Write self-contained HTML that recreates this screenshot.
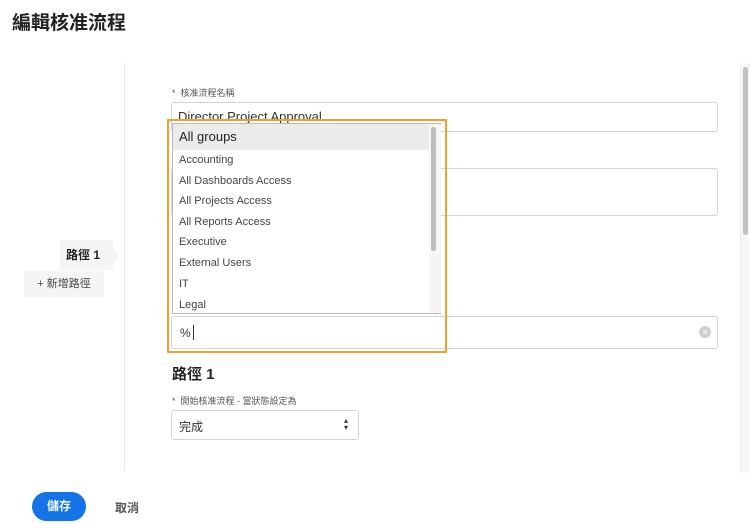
<!DOCTYPE html>
<html><head><meta charset="utf-8"><style>
*{box-sizing:border-box;margin:0;padding:0}
body{width:750px;height:532px;background:#fff;position:relative;overflow:hidden;font-family:"Liberation Sans","Noto Sans CJK TC",sans-serif;color:#222}
.a{position:absolute}
.inp{position:absolute;border:1px solid #d3d3d3;border-radius:3px;background:#fff}
.lbl{position:absolute;font-size:9px;color:#555}
.it{position:absolute;left:6px;font-size:11px;color:#444}
</style></head><body>
<div class="a" style="left:12px;top:8px;font-size:19px;font-weight:bold;color:#222">編輯核准流程</div>
<div class="a" style="left:124px;top:63px;width:1px;height:408px;background:#e6e6e6"></div>
<div class="a" style="left:60px;top:240px;width:53px;height:30px;background:#f5f5f5;font-size:12px;font-weight:bold;line-height:30px;padding-left:6px">路徑 1</div>
<div class="a" style="left:113px;top:248px;width:0;height:0;border-top:7px solid transparent;border-bottom:7px solid transparent;border-left:7px solid #f5f5f5"></div>
<div class="a" style="left:24px;top:271px;width:80px;height:26px;background:#f5f5f5;font-size:11px;line-height:26px;text-align:center;color:#444">+ 新增路徑</div>

<div class="lbl" style="left:172px;top:86px">* &nbsp;核准流程名稱</div>
<div class="inp" style="left:171px;top:102px;width:547px;height:30px"><div class="a" style="left:6px;top:6px;font-size:13px;color:#333">Director Project Approval</div></div>
<div class="inp" style="left:171px;top:168px;width:547px;height:48px"></div>
<div class="inp" style="left:171px;top:316px;width:547px;height:33px"><div class="a" style="left:8px;top:9px;font-size:12px;color:#333">%</div><div class="a" style="left:21px;top:8px;width:1px;height:15px;background:#333"></div><div class="a" style="left:527px;top:9px;width:12px;height:12px;border-radius:50%;background:#d0d0d0;color:#fff;font-size:9px;line-height:12px;text-align:center">×</div></div>

<div class="a" style="left:167px;top:119px;width:280px;height:234px;border:2px solid #f0a030"></div>
<div class="a" style="left:172px;top:123px;width:269px;height:191px;border:1px solid #bbb;background:#fff">
<div class="a" style="left:0;top:0;width:256px;height:26px;background:#ebebeb"></div>
<div class="it" style="top:5px;font-size:13px;color:#222">All groups</div>
<div class="it" style="top:30px">Accounting</div>
<div class="it" style="top:51px">All Dashboards Access</div>
<div class="it" style="top:71px">All Projects Access</div>
<div class="it" style="top:92px">All Reports Access</div>
<div class="it" style="top:112px">Executive</div>
<div class="it" style="top:133px">External Users</div>
<div class="it" style="top:154px">IT</div>
<div class="it" style="top:175px">Legal</div>
<div class="a" style="left:256px;top:0;width:12px;height:189px;background:#f5f5f5"></div>
<div class="a" style="left:258px;top:3px;width:5px;height:124px;border-radius:3px;background:#bdbdbd"></div>
</div>

<div class="a" style="left:172px;top:363px;font-size:15px;font-weight:bold">路徑 1</div>
<div class="lbl" style="left:172px;top:394px">* &nbsp;開始核准流程 - 當狀態設定為</div>
<div class="inp" style="left:171px;top:410px;width:188px;height:30px"><div class="a" style="left:7px;top:7px;font-size:12px;color:#333">完成</div><div class="a" style="left:172px;top:6px;font-size:8px;line-height:7px;color:#333">▴<br>▾</div></div>

<div class="a" style="left:740px;top:63px;width:10px;height:410px;background:#f7f7f7;border-left:1px solid #eee"></div>
<div class="a" style="left:743px;top:67px;width:5px;height:168px;border-radius:3px;background:#c1c1c1"></div>

<div class="a" style="left:32px;top:492px;width:54px;height:29px;border-radius:15px;background:#1473e6;color:#fff;font-size:12px;font-weight:bold;line-height:29px;text-align:center">儲存</div>
<div class="a" style="left:115px;top:499px;font-size:12px;font-weight:bold;color:#555">取消</div>
</body></html>
